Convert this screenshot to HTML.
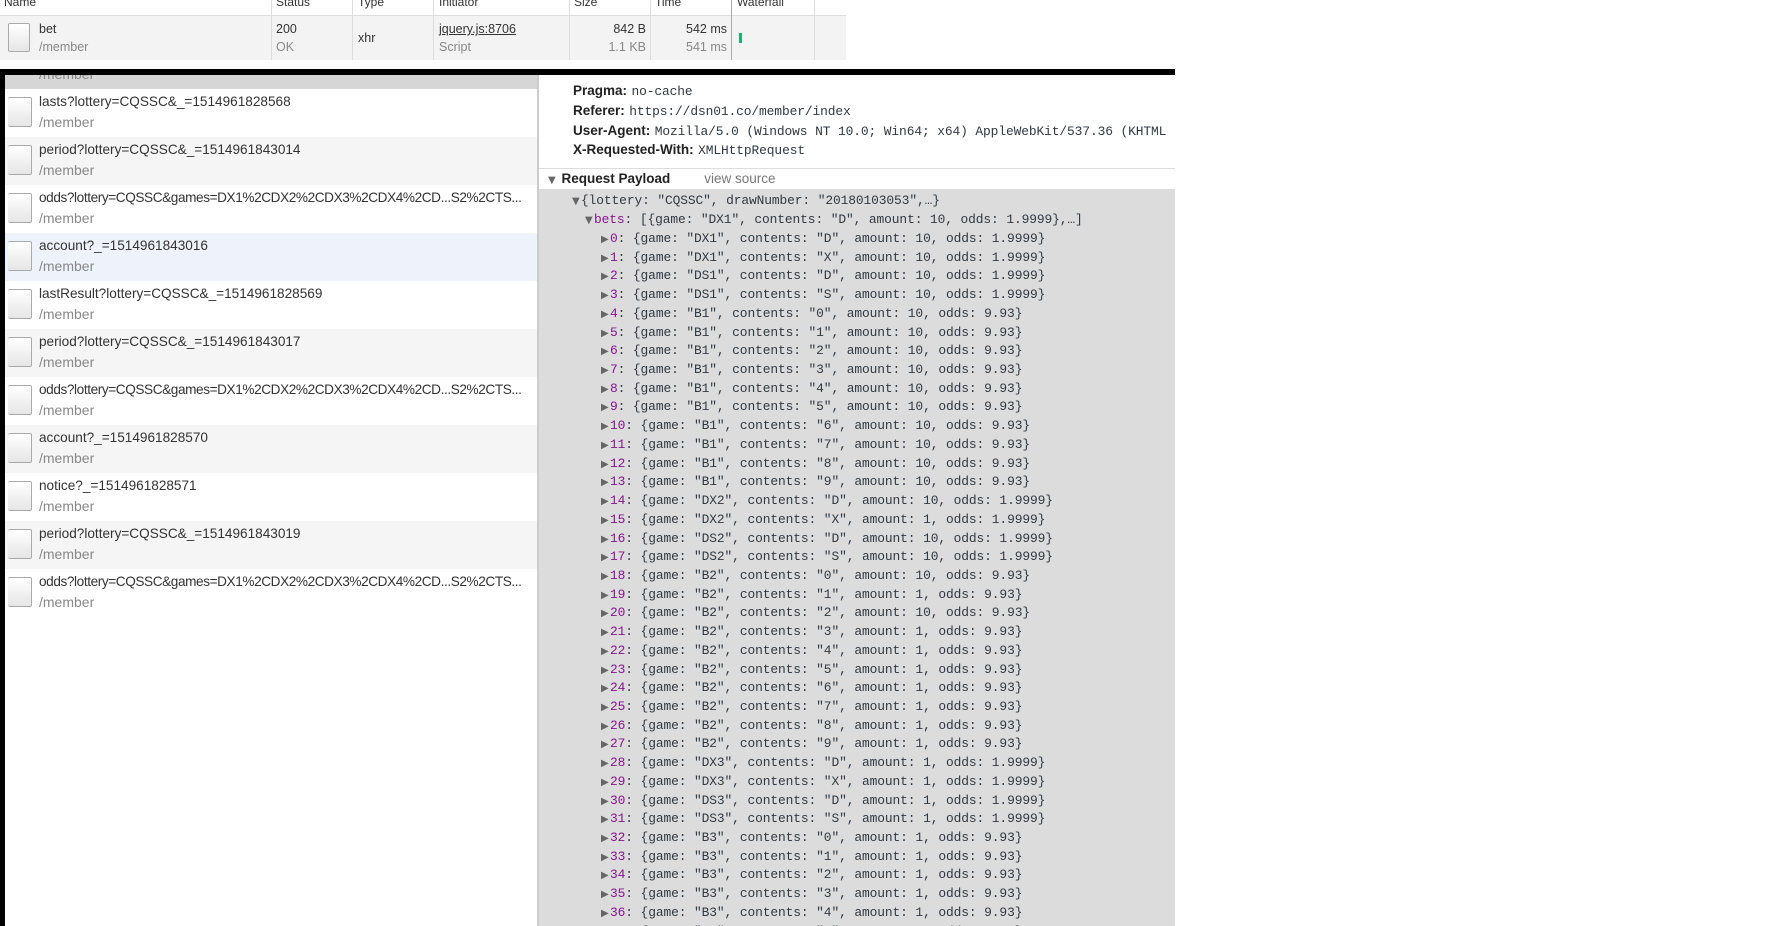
<!DOCTYPE html>
<html style="overflow:hidden;height:926px"><head><meta charset="utf-8"><style>
*{margin:0;padding:0;box-sizing:border-box}
body{width:1789px;height:926px;background:#fff;position:relative;overflow:hidden;font-family:"Liberation Sans",Arial,sans-serif}
.a{position:absolute;white-space:nowrap}
.hdr{font-size:12px;color:#333}
.col{position:absolute;top:0;width:1px;background:#ddd}
.row{position:absolute;left:5px;width:533px;height:48px}
.ic{position:absolute;left:3px;top:8px;width:24px;height:30px;background:linear-gradient(#fff,#e6e6e6);border:1px solid #aaa;border-radius:2px;border-left:none}
.nm{position:absolute;left:34px;top:5px;font-size:13.6px;color:#333;white-space:nowrap;max-width:496px;overflow:hidden}
.od{letter-spacing:-.4px}
.sb{position:absolute;left:34px;top:25px;font-size:14px;color:#888;white-space:nowrap}
.mono{font-family:"Liberation Mono","DejaVu Sans Mono",monospace;font-size:12.9px;color:#303942;letter-spacing:-.1px}
.k{font-family:"Liberation Sans",Arial,sans-serif;font-weight:bold;color:#222;font-size:13.5px}
.p{color:#881391}
.tri{color:#666;font-size:10px;font-family:"DejaVu Sans",sans-serif;line-height:10px;display:inline-block;width:9px}
.L div{height:18.72px;line-height:18.72px;overflow:hidden}
</style></head><body>

<div class="a" style="left:0;top:0;width:846px;height:16px;background:#fff;border-bottom:1px solid #ddd"></div>
<div class="a" style="left:0;top:16px;width:846px;height:44px;background:#f3f3f3"></div>
<div class="col" style="left:271px;height:60px"></div>
<div class="col" style="left:352px;height:60px"></div>
<div class="col" style="left:433px;height:60px"></div>
<div class="col" style="left:569px;height:60px"></div>
<div class="col" style="left:650px;height:60px"></div>
<div class="col" style="left:731px;height:60px;background:#aaa"></div>
<div class="col" style="left:814px;height:60px"></div>
<div class="a hdr" style="left:4px;top:-5px">Name</div>
<div class="a hdr" style="left:276px;top:-5px">Status</div>
<div class="a hdr" style="left:358px;top:-5px">Type</div>
<div class="a hdr" style="left:439px;top:-5px">Initiator</div>
<div class="a hdr" style="left:574px;top:-5px">Size</div>
<div class="a hdr" style="left:655px;top:-5px">Time</div>
<div class="a hdr" style="left:737px;top:-5px">Waterfall</div>
<div class="a" style="left:8px;top:23px;width:22px;height:29px;background:linear-gradient(#fff,#e6e6e6);border:1px solid #aaa;border-radius:2px"></div>
<div class="a" style="left:39px;top:22px;font-size:12.5px;color:#333">bet</div>
<div class="a" style="left:39px;top:40px;font-size:12.5px;color:#888">/member</div>
<div class="a" style="left:276px;top:22px;font-size:12.5px;color:#333">200</div>
<div class="a" style="left:276px;top:40px;font-size:12.5px;color:#888">OK</div>
<div class="a" style="left:358px;top:31px;font-size:12.5px;color:#333">xhr</div>
<div class="a" style="left:439px;top:22px;font-size:12.5px;color:#333;text-decoration:underline">jquery.js:8706</div>
<div class="a" style="left:439px;top:40px;font-size:12.5px;color:#888">Script</div>
<div class="a" style="left:560px;width:86px;text-align:right;top:22px;font-size:12.5px;color:#333">842 B</div>
<div class="a" style="left:560px;width:86px;text-align:right;top:40px;font-size:12.5px;color:#888">1.1 KB</div>
<div class="a" style="left:640px;width:87px;text-align:right;top:22px;font-size:12.5px;color:#333">542 ms</div>
<div class="a" style="left:640px;width:87px;text-align:right;top:40px;font-size:12.5px;color:#888">541 ms</div>
<div class="a" style="left:739px;top:33px;width:3px;height:10px;background:#1bb36a"></div>

<div class="a" style="left:0;top:69px;width:1175px;height:6px;background:#000"></div>
<div class="a" style="left:0;top:75px;width:5px;height:851px;background:#000"></div>

<div class="a" style="left:5px;top:75px;width:533px;height:14px;background:#d6d6d6;overflow:hidden"><div class="sb" style="top:-9px">/member</div></div>
<div class="row" style="top:89px;background:#fff"><div class="ic"></div><div class="nm">lasts?lottery=CQSSC&amp;_=1514961828568</div><div class="sb">/member</div></div>
<div class="row" style="top:137px;background:#f5f5f5"><div class="ic"></div><div class="nm">period?lottery=CQSSC&amp;_=1514961843014</div><div class="sb">/member</div></div>
<div class="row" style="top:185px;background:#fff"><div class="ic"></div><div class="nm od">odds?lottery=CQSSC&amp;games=DX1%2CDX2%2CDX3%2CDX4%2CD...S2%2CTS...</div><div class="sb">/member</div></div>
<div class="row" style="top:233px;background:#eef2fa"><div class="ic"></div><div class="nm">account?_=1514961843016</div><div class="sb">/member</div></div>
<div class="row" style="top:281px;background:#fff"><div class="ic"></div><div class="nm">lastResult?lottery=CQSSC&amp;_=1514961828569</div><div class="sb">/member</div></div>
<div class="row" style="top:329px;background:#f5f5f5"><div class="ic"></div><div class="nm">period?lottery=CQSSC&amp;_=1514961843017</div><div class="sb">/member</div></div>
<div class="row" style="top:377px;background:#fff"><div class="ic"></div><div class="nm od">odds?lottery=CQSSC&amp;games=DX1%2CDX2%2CDX3%2CDX4%2CD...S2%2CTS...</div><div class="sb">/member</div></div>
<div class="row" style="top:425px;background:#f5f5f5"><div class="ic"></div><div class="nm">account?_=1514961828570</div><div class="sb">/member</div></div>
<div class="row" style="top:473px;background:#fff"><div class="ic"></div><div class="nm">notice?_=1514961828571</div><div class="sb">/member</div></div>
<div class="row" style="top:521px;background:#f5f5f5"><div class="ic"></div><div class="nm">period?lottery=CQSSC&amp;_=1514961843019</div><div class="sb">/member</div></div>
<div class="row" style="top:569px;background:#fff"><div class="ic"></div><div class="nm od">odds?lottery=CQSSC&amp;games=DX1%2CDX2%2CDX3%2CDX4%2CD...S2%2CTS...</div><div class="sb">/member</div></div>
<div class="a" style="left:537px;top:75px;width:2px;height:851px;background:#ccc"></div>

<div class="a" style="left:539px;top:75px;width:636px;height:93px;background:#fff"></div>
<div class="a" style="left:539px;top:168px;width:636px;height:21px;background:#fff;border-top:1px solid #ddd"></div>
<div class="a" style="left:539px;top:189px;width:636px;height:737px;background:#dcdcdc"></div>

<div class="a" style="left:573px;top:82px"><span class="k">Pragma:</span> <span class="mono">no-cache</span></div>
<div class="a" style="left:573px;top:102px"><span class="k">Referer:</span> <span class="mono">https://dsn01.co/member/index</span></div>
<div class="a" style="left:573px;top:122px"><span class="k">User-Agent:</span> <span class="mono">Mozilla/5.0 (Windows NT 10.0; Win64; x64) AppleWebKit/537.36 (KHTML</span></div>
<div class="a" style="left:573px;top:141px"><span class="k">X-Requested-With:</span> <span class="mono">XMLHttpRequest</span></div>
<div class="a" style="left:548px;top:170px"><span class="tri">▼</span> <span class="k">Request Payload</span><span style="font-size:13.5px;color:#777;margin-left:34px">view source</span></div>

<div class="a mono L" style="left:572px;top:192px"><div><span class="tri">▼</span>{lottery: "CQSSC", drawNumber: "20180103053",…}</div></div>
<div class="a mono L" style="left:585px;top:211px"><div><span class="tri">▼</span><span class="p">bets</span>: [{game: "DX1", contents: "D", amount: 10, odds: 1.9999},…]</div></div>
<div class="a mono L" style="left:601px;top:230px">
<div><span class="tri">▶</span><span class="p">0</span>: {game: "DX1", contents: "D", amount: 10, odds: 1.9999}</div>
<div><span class="tri">▶</span><span class="p">1</span>: {game: "DX1", contents: "X", amount: 10, odds: 1.9999}</div>
<div><span class="tri">▶</span><span class="p">2</span>: {game: "DS1", contents: "D", amount: 10, odds: 1.9999}</div>
<div><span class="tri">▶</span><span class="p">3</span>: {game: "DS1", contents: "S", amount: 10, odds: 1.9999}</div>
<div><span class="tri">▶</span><span class="p">4</span>: {game: "B1", contents: "0", amount: 10, odds: 9.93}</div>
<div><span class="tri">▶</span><span class="p">5</span>: {game: "B1", contents: "1", amount: 10, odds: 9.93}</div>
<div><span class="tri">▶</span><span class="p">6</span>: {game: "B1", contents: "2", amount: 10, odds: 9.93}</div>
<div><span class="tri">▶</span><span class="p">7</span>: {game: "B1", contents: "3", amount: 10, odds: 9.93}</div>
<div><span class="tri">▶</span><span class="p">8</span>: {game: "B1", contents: "4", amount: 10, odds: 9.93}</div>
<div><span class="tri">▶</span><span class="p">9</span>: {game: "B1", contents: "5", amount: 10, odds: 9.93}</div>
<div><span class="tri">▶</span><span class="p">10</span>: {game: "B1", contents: "6", amount: 10, odds: 9.93}</div>
<div><span class="tri">▶</span><span class="p">11</span>: {game: "B1", contents: "7", amount: 10, odds: 9.93}</div>
<div><span class="tri">▶</span><span class="p">12</span>: {game: "B1", contents: "8", amount: 10, odds: 9.93}</div>
<div><span class="tri">▶</span><span class="p">13</span>: {game: "B1", contents: "9", amount: 10, odds: 9.93}</div>
<div><span class="tri">▶</span><span class="p">14</span>: {game: "DX2", contents: "D", amount: 10, odds: 1.9999}</div>
<div><span class="tri">▶</span><span class="p">15</span>: {game: "DX2", contents: "X", amount: 1, odds: 1.9999}</div>
<div><span class="tri">▶</span><span class="p">16</span>: {game: "DS2", contents: "D", amount: 10, odds: 1.9999}</div>
<div><span class="tri">▶</span><span class="p">17</span>: {game: "DS2", contents: "S", amount: 10, odds: 1.9999}</div>
<div><span class="tri">▶</span><span class="p">18</span>: {game: "B2", contents: "0", amount: 10, odds: 9.93}</div>
<div><span class="tri">▶</span><span class="p">19</span>: {game: "B2", contents: "1", amount: 1, odds: 9.93}</div>
<div><span class="tri">▶</span><span class="p">20</span>: {game: "B2", contents: "2", amount: 10, odds: 9.93}</div>
<div><span class="tri">▶</span><span class="p">21</span>: {game: "B2", contents: "3", amount: 1, odds: 9.93}</div>
<div><span class="tri">▶</span><span class="p">22</span>: {game: "B2", contents: "4", amount: 1, odds: 9.93}</div>
<div><span class="tri">▶</span><span class="p">23</span>: {game: "B2", contents: "5", amount: 1, odds: 9.93}</div>
<div><span class="tri">▶</span><span class="p">24</span>: {game: "B2", contents: "6", amount: 1, odds: 9.93}</div>
<div><span class="tri">▶</span><span class="p">25</span>: {game: "B2", contents: "7", amount: 1, odds: 9.93}</div>
<div><span class="tri">▶</span><span class="p">26</span>: {game: "B2", contents: "8", amount: 1, odds: 9.93}</div>
<div><span class="tri">▶</span><span class="p">27</span>: {game: "B2", contents: "9", amount: 1, odds: 9.93}</div>
<div><span class="tri">▶</span><span class="p">28</span>: {game: "DX3", contents: "D", amount: 1, odds: 1.9999}</div>
<div><span class="tri">▶</span><span class="p">29</span>: {game: "DX3", contents: "X", amount: 1, odds: 1.9999}</div>
<div><span class="tri">▶</span><span class="p">30</span>: {game: "DS3", contents: "D", amount: 1, odds: 1.9999}</div>
<div><span class="tri">▶</span><span class="p">31</span>: {game: "DS3", contents: "S", amount: 1, odds: 1.9999}</div>
<div><span class="tri">▶</span><span class="p">32</span>: {game: "B3", contents: "0", amount: 1, odds: 9.93}</div>
<div><span class="tri">▶</span><span class="p">33</span>: {game: "B3", contents: "1", amount: 1, odds: 9.93}</div>
<div><span class="tri">▶</span><span class="p">34</span>: {game: "B3", contents: "2", amount: 1, odds: 9.93}</div>
<div><span class="tri">▶</span><span class="p">35</span>: {game: "B3", contents: "3", amount: 1, odds: 9.93}</div>
<div><span class="tri">▶</span><span class="p">36</span>: {game: "B3", contents: "4", amount: 1, odds: 9.93}</div>
<div><span class="tri">▶</span><span class="p">37</span>: {game: "B3", contents: "5", amount: 1, odds: 9.93}</div>
</div>
</body></html>
